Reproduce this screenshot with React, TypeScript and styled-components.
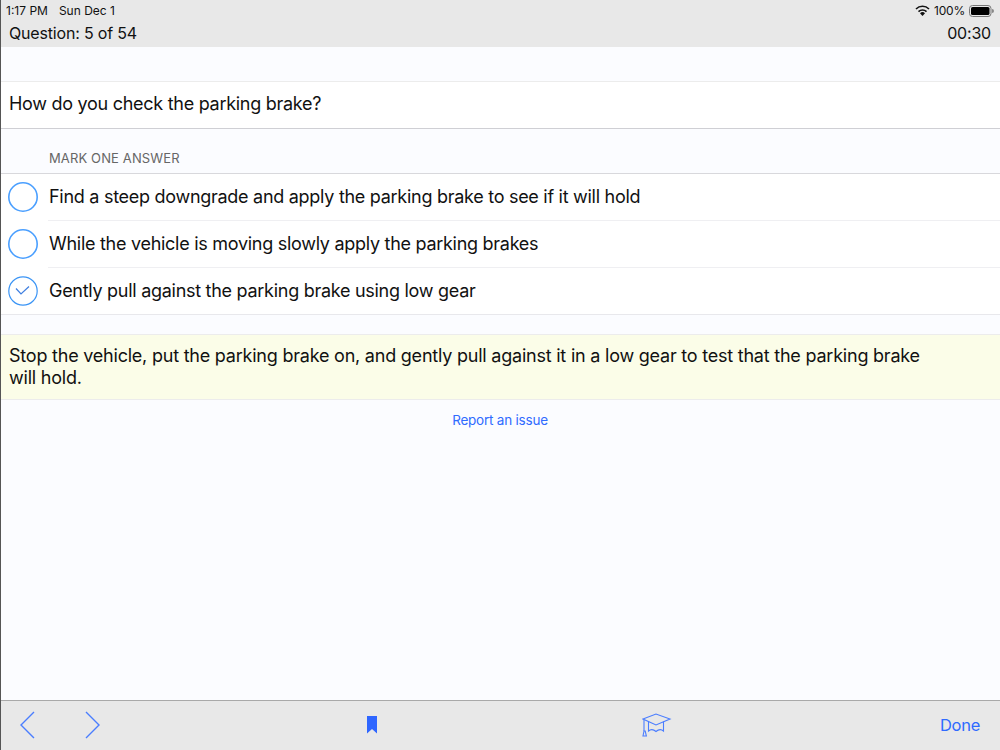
import React from "react";
import styled, { createGlobalStyle } from "styled-components";

const Global = createGlobalStyle`
  html, body { margin: 0; padding: 0; height: 100%; background: #fbfcff; }
  #root { height: 100%; }
  * { box-sizing: border-box; }
`;

const Screen = styled.div`
  width: 1000px;
  height: 750px;
  display: flex;
  flex-direction: column;
  background: #fbfcff;
  border-left: 1px solid #555;
  font-family: Inter, "Liberation Sans", sans-serif;
  color: #111;
  overflow: hidden;
`;

const Header = styled.header`
  height: 47px;
  flex: none;
  background: #e8e8e8;
  display: flex;
  flex-direction: column;
`;

const StatusBar = styled.div`
  height: 20px;
  padding: 1px 6px 0 5px;
  display: flex;
  align-items: center;
  justify-content: space-between;
  font-size: 12px;
  color: #111;
`;

const StatusLeft = styled.div`
  display: flex;
  gap: 11px;
`;

const StatusRight = styled.div`
  display: flex;
  align-items: center;
  gap: 4px;
  letter-spacing: -0.2px;
`;

const HeaderRow = styled.div`
  flex: 1;
  padding: 0 9px 2px 8px;
  display: flex;
  align-items: center;
  justify-content: space-between;
  font-size: 16px;
  letter-spacing: -0.18px;
`;

const QuestionRow = styled.div`
  margin-top: 34px;
  height: 48px;
  flex: none;
  padding: 0 8px 3px;
  display: flex;
  align-items: center;
  background: #fff;
  border-top: 1px solid #ececec;
  border-bottom: 1px solid #cfcfd4;
  font-size: 18px;
  letter-spacing: -0.28px;
`;

const SectionLabel = styled.div`
  height: 45px;
  flex: none;
  padding: 15px 0 0 48px;
  font-size: 13px;
  line-height: 29px;
  letter-spacing: 0.13px;
  color: #666;
  border-bottom: 1px solid #d8d8dc;
  display: flex;
  align-items: center;
`;

const Answers = styled.div`
  flex: none;
  background: #fff;
  border-bottom: 1px solid #e8e8ec;
`;

const Answer = styled.div`
  height: 46px;
  display: flex;
  align-items: center;
  padding: 0 0 1px 7px;
  gap: 11px;
  font-size: 18px;
  letter-spacing: -0.28px;
`;

const RowRule = styled.div`
  height: 1px;
  margin-left: 47px;
  background: #efeff2;
`;

const RadioIcon = styled.svg`
  flex: none;
`;

const Explanation = styled.div`
  margin-top: 19px;
  flex: none;
  height: 66px;
  padding: 10px 8px 0;
  background: #fbfde8;
  border-top: 1px solid #ececec;
  border-bottom: 1px solid #ececec;
  font-size: 18px;
  line-height: 22px;
  letter-spacing: -0.22px;
  color: #111;
`;

const ExplanationText = styled.div`
  max-width: 930px;
`;

const Report = styled.a`
  margin-top: 11px;
  align-self: center;
  font-size: 13.5px;
  line-height: 18px;
  letter-spacing: -0.22px;
  color: #2f6bff;
  margin-right: 1px;
`;

const Spacer = styled.div`
  flex: 1;
`;

const Toolbar = styled.footer`
  height: 50px;
  flex: none;
  background: #e8e8e8;
  border-top: 1px solid #a9a9a9;
  display: flex;
  align-items: center;
  padding: 0 20px 1px 18px;
`;

const NavGroup = styled.div`
  display: flex;
  align-items: center;
  gap: 38px;
  width: 348px;
`;

const CenterIcon = styled.div`
  display: flex;
  align-items: center;
`;

const Cap = styled(CenterIcon)`
  margin-left: 264px;
`;

const Done = styled.span`
  margin-left: auto;
  font-size: 16.5px;
  letter-spacing: -0.3px;
  color: #2f6bff;
`;

const BLUE = "#4a7dff";

const Chevron = ({ flip }: { flip?: boolean }) => (
  <svg width="22" height="28" viewBox="0 0 22 28" fill="none" style={flip ? { transform: "scaleX(-1)" } : undefined}>
    <path d="M15 1 L2 14 L15 27" stroke={BLUE} strokeWidth="1.4" />
  </svg>
);

const Radio = ({ checked }: { checked?: boolean }) => (
  <RadioIcon width="30" height="30" viewBox="0 0 30 30" fill="none">
    <circle cx="15" cy="15" r="14.2" stroke={checked ? "#3a94f5" : "#4a9fff"} strokeWidth={checked ? 1.2 : 1.6} />
    {checked && <path d="M8 12.5 L13 18 L21 10.5" stroke="#3f7fe0" strokeWidth="1.2" />}
  </RadioIcon>
);

export default function App() {
  return (
    <Screen>
      <Global />
      <Header>
        <StatusBar>
          <StatusLeft>
            <span>1:17 PM</span>
            <span>Sun Dec 1</span>
          </StatusLeft>
          <StatusRight>
            <svg width="15" height="11" viewBox="0 0 15 11">
              <path d="M7.5 11 L5 8.2 A3.6 3.6 0 0 1 10 8.2 Z" fill="#111" />
              <path d="M3.5 6.6 A5.8 5.8 0 0 1 11.5 6.6" stroke="#111" strokeWidth="1.6" fill="none" />
              <path d="M1 4 A9.2 9.2 0 0 1 14 4" stroke="#111" strokeWidth="1.6" fill="none" />
            </svg>
            <span>100%</span>
            <svg width="25" height="12" viewBox="0 0 25 12">
              <rect x="0.5" y="0.5" width="21.5" height="11" rx="3" fill="none" stroke="#777" />
              <rect x="2" y="2" width="18.5" height="8" rx="1.6" fill="#000" />
              <path d="M23 4 a2 2 0 0 1 0 4 Z" fill="#888" />
            </svg>
          </StatusRight>
        </StatusBar>
        <HeaderRow>
          <span>Question: 5 of 54</span>
          <span>00:30</span>
        </HeaderRow>
      </Header>
      <QuestionRow>How do you check the parking brake?</QuestionRow>
      <SectionLabel>MARK ONE ANSWER</SectionLabel>
      <Answers>
        <Answer>
          <Radio />
          Find a steep downgrade and apply the parking brake to see if it will hold
        </Answer>
        <RowRule />
        <Answer>
          <Radio />
          While the vehicle is moving slowly apply the parking brakes
        </Answer>
        <RowRule />
        <Answer>
          <Radio checked />
          Gently pull against the parking brake using low gear
        </Answer>
      </Answers>
      <Explanation>
        <ExplanationText>
          Stop the vehicle, put the parking brake on, and gently pull against it in a low gear to test that the parking brake will hold.
        </ExplanationText>
      </Explanation>
      <Report>Report an issue</Report>
      <Spacer />
      <Toolbar>
        <NavGroup>
          <Chevron />
          <Chevron flip />
        </NavGroup>
        <CenterIcon>
          <svg width="11" height="18" viewBox="0 0 11 18">
            <path d="M0 0 H10 V17.5 L5 13 L0 17.5 Z" fill="#2f66ff" />
          </svg>
        </CenterIcon>
        <Cap>
          <svg width="30" height="24" viewBox="0 0 30 24" fill="none" stroke={BLUE} strokeWidth="1.1">
            <path d="M1 6 L14 1 L28 6 L14 12 Z" />
            <path d="M2 6.5 V18" />
            <path d="M2 18 L1 23 H4.4 L3.2 18 Z" />
            <path d="M6.5 8.5 V18 Q10 15 14 18.5 Q18 15 21.5 18 V8.5" />
          </svg>
        </Cap>
        <Done>Done</Done>
      </Toolbar>
    </Screen>
  );
}
